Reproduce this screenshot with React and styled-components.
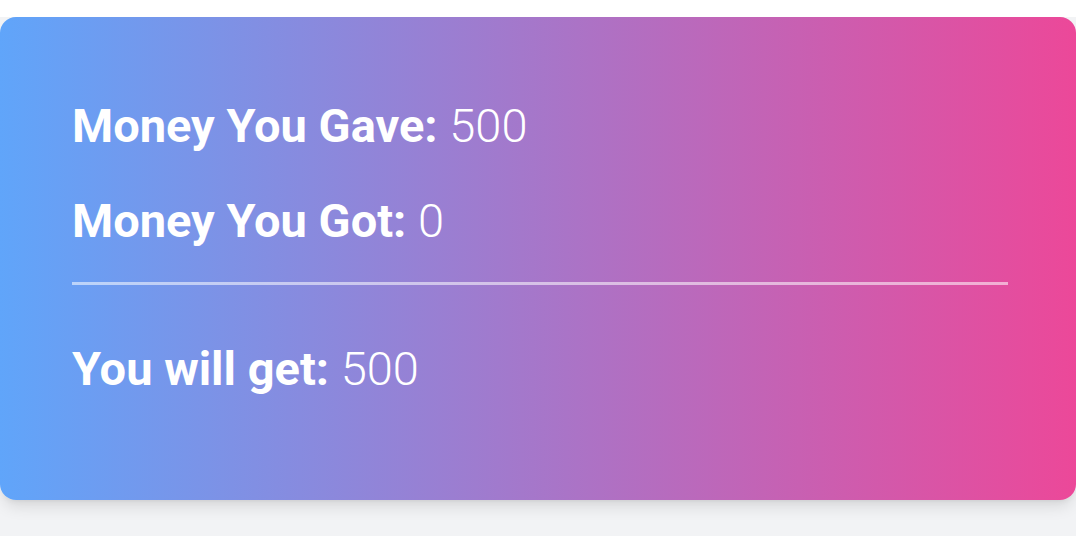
import styled, { createGlobalStyle } from 'styled-components';

const GlobalStyle = createGlobalStyle`
	html, body {
		margin: 0;
		padding: 0;
		background: #f2f3f5;
		font-family: Roboto, "Liberation Sans", sans-serif;
	}
`;

const TopBar = styled.div`
	height: 17px;
	background: #ffffff;
`;

const Main = styled.main`
	min-height: 519px;
	background: #f2f3f5;
`;

const Card = styled.section`
	display: flex;
	flex-direction: column;
	padding: 81px 68px 103px 72px;
	border-radius: 16px;
	background: linear-gradient(to right, #60a5fa, #ec4899);
	box-shadow: 0 10px 15px -3px rgba(0, 0, 0, 0.1), 0 4px 6px -4px rgba(0, 0, 0, 0.1);
	color: #ffffff;
`;

const Row = styled.p`
	margin: 0;
	margin-top: ${({ $gap }) => $gap || 0}px;
	font-size: 47px;
	line-height: 56px;

	strong {
		font-weight: 700;
	}
	span {
		font-weight: 300;
	}
`;

const Divider = styled.hr`
	margin: 33px 0 0 0;
	border: none;
	height: 3px;
	background: rgba(255, 255, 255, 0.55);
`;

const Result = styled(Row)`
	margin-top: 56px;
`;

const App = () => {
	const gave = 500;
	const got = 0;

	return (
		<>
			<GlobalStyle />
			<TopBar />
			<Main>
				<Card>
					<Row>
						<strong>Money You Gave:</strong> <span>{gave}</span>
					</Row>
					<Row $gap={39}>
						<strong>Money You Got:</strong> <span>{got}</span>
					</Row>
					<Divider />
					<Result>
						<strong>You will get:</strong> <span>{gave - got}</span>
					</Result>
				</Card>
			</Main>
		</>
	);
};

export default App;
